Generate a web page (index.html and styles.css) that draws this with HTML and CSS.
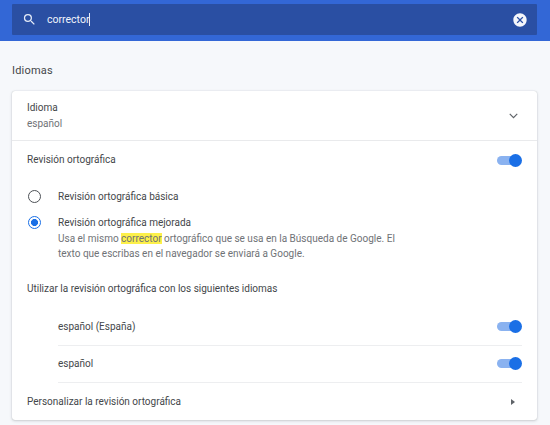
FILE: index.html
```html
<!DOCTYPE html>
<html lang="es">
<head>
<meta charset="utf-8">
<title>Idiomas</title>
<link rel="stylesheet" href="styles.css">
</head>
<body>
<header class="topbar">
  <div class="search">
    <svg class="search-icon" viewBox="0 0 24 24" width="15" height="15"><path fill="#e4ebf8" d="M15.5 14h-.79l-.28-.27A6.47 6.47 0 0 0 16 9.5 6.5 6.5 0 1 0 9.5 16c1.61 0 3.09-.59 4.23-1.57l.27.28v.79l5 4.99L20.49 19l-4.99-5zm-6 0C7.01 14 5 11.99 5 9.5S7.01 5 9.5 5 14 7.01 14 9.5 11.99 14 9.5 14z"/></svg>
    <span class="query">corrector</span><span class="caret"></span>
    <svg class="clear-icon" viewBox="0 0 24 24" width="16" height="16"><path fill="#f4f6fb" d="M12 2C6.47 2 2 6.47 2 12s4.47 10 10 10 10-4.47 10-10S17.53 2 12 2zm5 13.59L15.59 17 12 13.41 8.41 17 7 15.59 10.59 12 7 8.41 8.41 7 12 10.59 15.59 7 17 8.41 13.41 12 17 15.59z"/></svg>
  </div>
</header>
<main class="content">
  <h2 class="section-title">Idiomas</h2>
  <section class="card">
    <div class="row row-lang">
      <div>
        <div class="label">Idioma</div>
        <div class="sublabel">español</div>
      </div>
      <svg class="chevron" viewBox="0 0 12 8" width="9" height="6"><path fill="none" stroke="#5f6368" stroke-width="1.6" d="M1 1.2l5 5 5-5"/></svg>
    </div>
    <div class="row row-spell">
      <span class="label">Revisión ortográfica</span>
      <span class="toggle"><span class="knob"></span></span>
    </div>
    <div class="radios">
      <div class="radio-row radio-basic">
        <span class="radio"></span>
        <span class="label">Revisión ortográfica básica</span>
      </div>
      <div class="radio-row radio-enhanced">
        <span class="radio radio-on"></span>
        <div>
          <div class="label">Revisión ortográfica mejorada</div>
          <div class="sublabel desc">Usa el mismo <mark class="hit">corrector</mark> ortográfico que se usa en la Búsqueda de Google. El<br>texto que escribas en el navegador se enviará a Google.</div>
        </div>
      </div>
    </div>
    <div class="use-title label">Utilizar la revisión ortográfica con los siguientes idiomas</div>
    <div class="langs">
      <div class="lang-row">
        <span class="label">español (España)</span>
        <span class="toggle"><span class="knob"></span></span>
      </div>
      <div class="lang-row">
        <span class="label">español</span>
        <span class="toggle"><span class="knob"></span></span>
      </div>
    </div>
    <div class="row row-custom">
      <span class="label">Personalizar la revisión ortográfica</span>
      <svg class="arrow" viewBox="0 0 4 6" width="4" height="6"><path fill="#5f6368" d="M0 0l4 3-4 3z"/></svg>
    </div>
  </section>
</main>
</body>
</html>
```
FILE: styles.css
```css
* { box-sizing: border-box; }
html, body { margin: 0; height: 100%; }
body {
  background: #f6f8fb;
  font-family: Roboto, "Liberation Sans", sans-serif;
  font-size: 10px;
  line-height: 15.5px;
  color: #3c4043;
  overflow: hidden;
}
.topbar {
  height: 41px;
  padding: 4px 13px 6px 12px;
  background: #3367d6;
}
.search {
  height: 31px;
  display: flex;
  align-items: center;
  padding: 0 9px 0 10px;
  background: #2a4fa3;
  border-radius: 1px;
  color: #f1f4fb;
}
.search-icon { flex: none; }
.query { margin-left: 10px; font-size: 10.5px; }
.caret { width: 1px; height: 13px; background: #e8edf8; }
.clear-icon { margin-left: auto; }
.content { padding: 0 13px 0 12px; }
.section-title {
  margin: 0;
  padding-top: 22px;
  height: 50px;
  font-size: 11px;
  font-weight: 400;
  line-height: 15px;
  letter-spacing: .2px;
  color: #44474a;
}
.card {
  background: #fff;
  border-radius: 3px;
  box-shadow: 0 0 1px rgba(60, 64, 67, .3), 0 1px 3px rgba(60, 64, 67, .22);
  height: 329px;
}
.row {
  display: flex;
  align-items: center;
  justify-content: space-between;
  padding: 0 15px;
}
.row-lang { height: 50px; border-bottom: 1px solid #e9eaec; padding-right: 19px; }
.row-spell { height: 38px; }
.label { color: #44474a; }
.sublabel { color: #6f7276; }
.toggle {
  position: relative;
  display: block;
  flex: none;
  width: 24px;
  height: 9px;
  margin-right: 1px;
  border-radius: 5px;
  background: #8ab2f0;
}
.knob {
  position: absolute;
  right: -1px;
  top: -2px;
  width: 13px;
  height: 13px;
  border-radius: 50%;
  background: #1a6fe6;
}
.radios { padding: 0 15px; }
.radio-row { display: flex; align-items: flex-start; }
.radio-basic { padding-top: 10px; height: 36px; }
.radio-basic .radio { margin-top: 1px; }
.radio {
  flex: none;
  width: 13px;
  height: 13px;
  margin: 0 17px 0 1px;
  border: 1.5px solid #4d5156;
  border-radius: 50%;
  background: #fff;
}
.radio-on {
  margin-top: 1px;
  border-color: #1a6fe6;
  background: radial-gradient(circle, #1a6fe6 0 3.2px, #fff 3.8px);
}
.desc { width: 360px; }
.hit { background: #fdf04a; color: inherit; }
.use-title { padding: 19px 15px 0; height: 47px; }
.langs { margin-left: 46px; margin-right: 15px; }
.lang-row {
  display: flex;
  align-items: center;
  justify-content: space-between;
  height: 37px;
  border-bottom: 1px solid #edeef0;
}
.row-custom { height: 37px; padding: 2px 22px 0 15px; }
```
